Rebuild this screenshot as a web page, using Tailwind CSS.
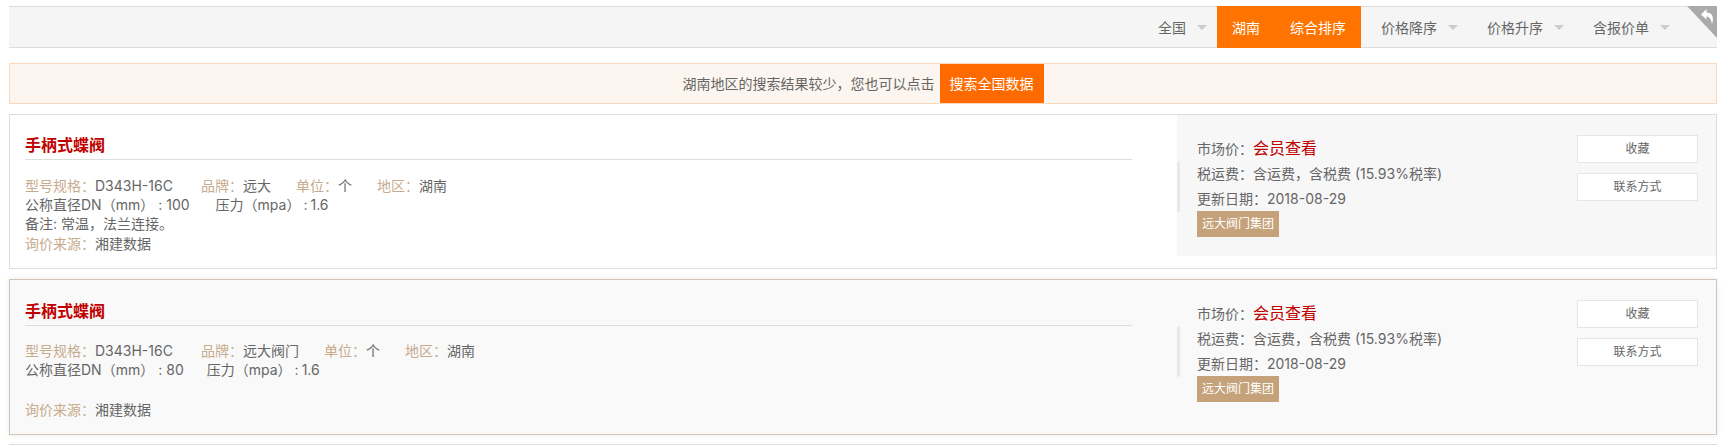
<!DOCTYPE html>
<html lang="zh-CN">
<head>
    <meta charset="UTF-8">
    <meta name="viewport" content="width=device-width, initial-scale=1.0">
    <title>询价结果</title>
    <script src="https://cdn.jsdelivr.net/npm/@tailwindcss/browser@4"></script>
</head>
<body class="bg-white font-['Inter','Noto_Sans_CJK_SC',sans-serif] text-[14px] text-[#666] overflow-hidden [text-spacing-trim:space-all]">
    <div class="pl-[9px] pr-[8px] pt-[6px]">
        <!-- sort bar -->
        <div class="relative h-[42px] bg-[#f5f5f5] border-y border-[#ddd] flex justify-end pr-[37px]">
            <a class="flex items-center pl-[21px] pr-[10px]"><span>全国</span><i class="ml-[11px] mt-[1px] w-0 h-0 border-x-[5px] border-x-transparent border-t-[5px] border-t-[#ccc]"></i></a>
            <div class="flex bg-[#ff7300] text-white -my-px">
                <a class="flex items-center px-[15px]">湖南</a>
                <a class="flex items-center px-[15px]">综合排序</a>
            </div>
            <a class="flex items-center pl-[20px] pr-[10px]"><span>价格降序</span><i class="ml-[11px] mt-[1px] w-0 h-0 border-x-[5px] border-x-transparent border-t-[5px] border-t-[#ccc]"></i></a>
            <a class="flex items-center pl-[19px] pr-[10px]"><span>价格升序</span><i class="ml-[11px] mt-[1px] w-0 h-0 border-x-[5px] border-x-transparent border-t-[5px] border-t-[#ccc]"></i></a>
            <a class="flex items-center pl-[19px] pr-[10px]"><span>含报价单</span><i class="ml-[11px] mt-[1px] w-0 h-0 border-x-[5px] border-x-transparent border-t-[5px] border-t-[#ccc]"></i></a>
            <svg class="absolute -top-px right-0" width="30" height="32" viewBox="0 0 30 32">
                <path d="M0 0H30V32Z" fill="#aaa"/>
                <path d="M19.500 3L14 8.500L19.500 13.500V10.500C22 10.500 24 12.500 25 18C27.500 11 25 6.500 19.500 6.500Z" fill="#fff"/>
            </svg>
        </div>

        <!-- notice -->
        <div class="mt-[15px] h-[41px] bg-[#fdf6f0] border border-[#f8d9bd] flex justify-center items-center">
            <span>湖南地区的搜索结果较少，您也可以点击</span>
            <a class="ml-[5px] h-[39px] w-[104px] flex items-center justify-center bg-[#ff6a00] text-white">搜索全国数据</a>
        </div>

        <!-- card 1 -->
        <div class="mt-[10px] h-[155px] border border-[#ddd] flex">
            <div class="w-[1122px] pl-[15px]">
                <h3 class="h-[45px] pt-[16px] leading-[28px] text-[16px] font-semibold text-[#c00000] border-b border-[#ddd]">手柄式蝶阀</h3>
                <div class="mt-[16px] leading-[19px]">
                    <div><span class="text-[#c7ab8d]">型号规格：</span><span class="mr-[28px]">D343H-16C</span><span class="text-[#c7ab8d]">品牌：</span><span class="mr-[25px]">远大</span><span class="text-[#c7ab8d]">单位：</span><span class="mr-[25px]">个</span><span class="text-[#c7ab8d]">地区：</span><span>湖南</span></div>
                    <div><span class="mr-[26px]">公称直径DN（mm）<span class="ml-[4px] mr-[4px]">:</span>100</span><span>压力（mpa）<span class="ml-[3px] mr-[3px]">:</span>1.6</span></div>
                    <div>备注: 常温，法兰连接。</div>
                    <div class="mt-[1px]"><span class="text-[#c7ab8d]">询价来源：</span><span>湘建数据</span></div>
                </div>
            </div>
            <div class="relative flex-1 h-[141px] ml-[45px] bg-[#f7f7f7] flex pl-[20px] pr-[18px] pt-[20px] justify-between">
                <i class="absolute left-0 top-[46px] w-[3px] h-[51px] bg-[#e8e8e8] rounded-[2px]"></i>
                <div class="leading-[25px]">
                    <div class="h-[25px] mt-[1px]">市场价：<span class="text-[16px] text-[#c00000]">会员查看</span></div>
                    <div>税运费：含运费，含税费 (15.93%税率)</div>
                    <div>更新日期：2018-08-29</div>
                    <div class="w-[82px] h-[26px] bg-[#c5a27a] text-white text-[12px] leading-[26px] text-center">远大阀门集团</div>
                </div>
                <div class="w-[121px] text-[12px]">
                    <a class="block h-[28px] leading-[26px] bg-white border border-[#e5e5e5] text-center">收藏</a>
                    <a class="block mt-[10px] h-[28px] leading-[26px] bg-white border border-[#e5e5e5] text-center">联系方式</a>
                </div>
            </div>
        </div>

        <!-- card 2 -->
        <div class="mt-[10px] h-[156px] border border-[#d6c4b2] bg-[#f9f9f9] shadow-[0_0_6px_rgba(0,0,0,0.08)] flex">
            <div class="w-[1122px] pl-[15px]">
                <h3 class="h-[46px] pt-[17px] leading-[28px] text-[16px] font-semibold text-[#c00000] border-b border-[#ddd]">手柄式蝶阀</h3>
                <div class="mt-[15px] leading-[19px]">
                    <div><span class="text-[#c7ab8d]">型号规格：</span><span class="mr-[28px]">D343H-16C</span><span class="text-[#c7ab8d]">品牌：</span><span class="mr-[25px]">远大阀门</span><span class="text-[#c7ab8d]">单位：</span><span class="mr-[25px]">个</span><span class="text-[#c7ab8d]">地区：</span><span>湖南</span></div>
                    <div><span class="mr-[23px]">公称直径DN（mm）<span class="ml-[4px] mr-[4px]">:</span>80</span><span>压力（mpa）<span class="ml-[3px] mr-[3px]">:</span>1.6</span></div>
                    <div class="h-[19px]"></div>
                    <div class="mt-[2px]"><span class="text-[#c7ab8d]">询价来源：</span><span>湘建数据</span></div>
                </div>
            </div>
            <div class="relative flex-1 ml-[45px] flex pl-[20px] pr-[18px] pt-[20px] justify-between">
                <i class="absolute left-0 top-[46px] w-[3px] h-[51px] bg-[#e8e8e8] rounded-[2px]"></i>
                <div class="leading-[25px]">
                    <div class="h-[25px] mt-[1px]">市场价：<span class="text-[16px] text-[#c00000]">会员查看</span></div>
                    <div>税运费：含运费，含税费 (15.93%税率)</div>
                    <div>更新日期：2018-08-29</div>
                    <div class="w-[82px] h-[26px] bg-[#c5a27a] text-white text-[12px] leading-[26px] text-center">远大阀门集团</div>
                </div>
                <div class="w-[121px] text-[12px]">
                    <a class="block h-[28px] leading-[26px] bg-white border border-[#e5e5e5] text-center">收藏</a>
                    <a class="block mt-[10px] h-[28px] leading-[26px] bg-white border border-[#e5e5e5] text-center">联系方式</a>
                </div>
            </div>
        </div>

        <!-- next card, cut off by the window -->
        <div class="mt-[9px] h-px bg-[#ddd]"></div>
    </div>
</body>
</html>
